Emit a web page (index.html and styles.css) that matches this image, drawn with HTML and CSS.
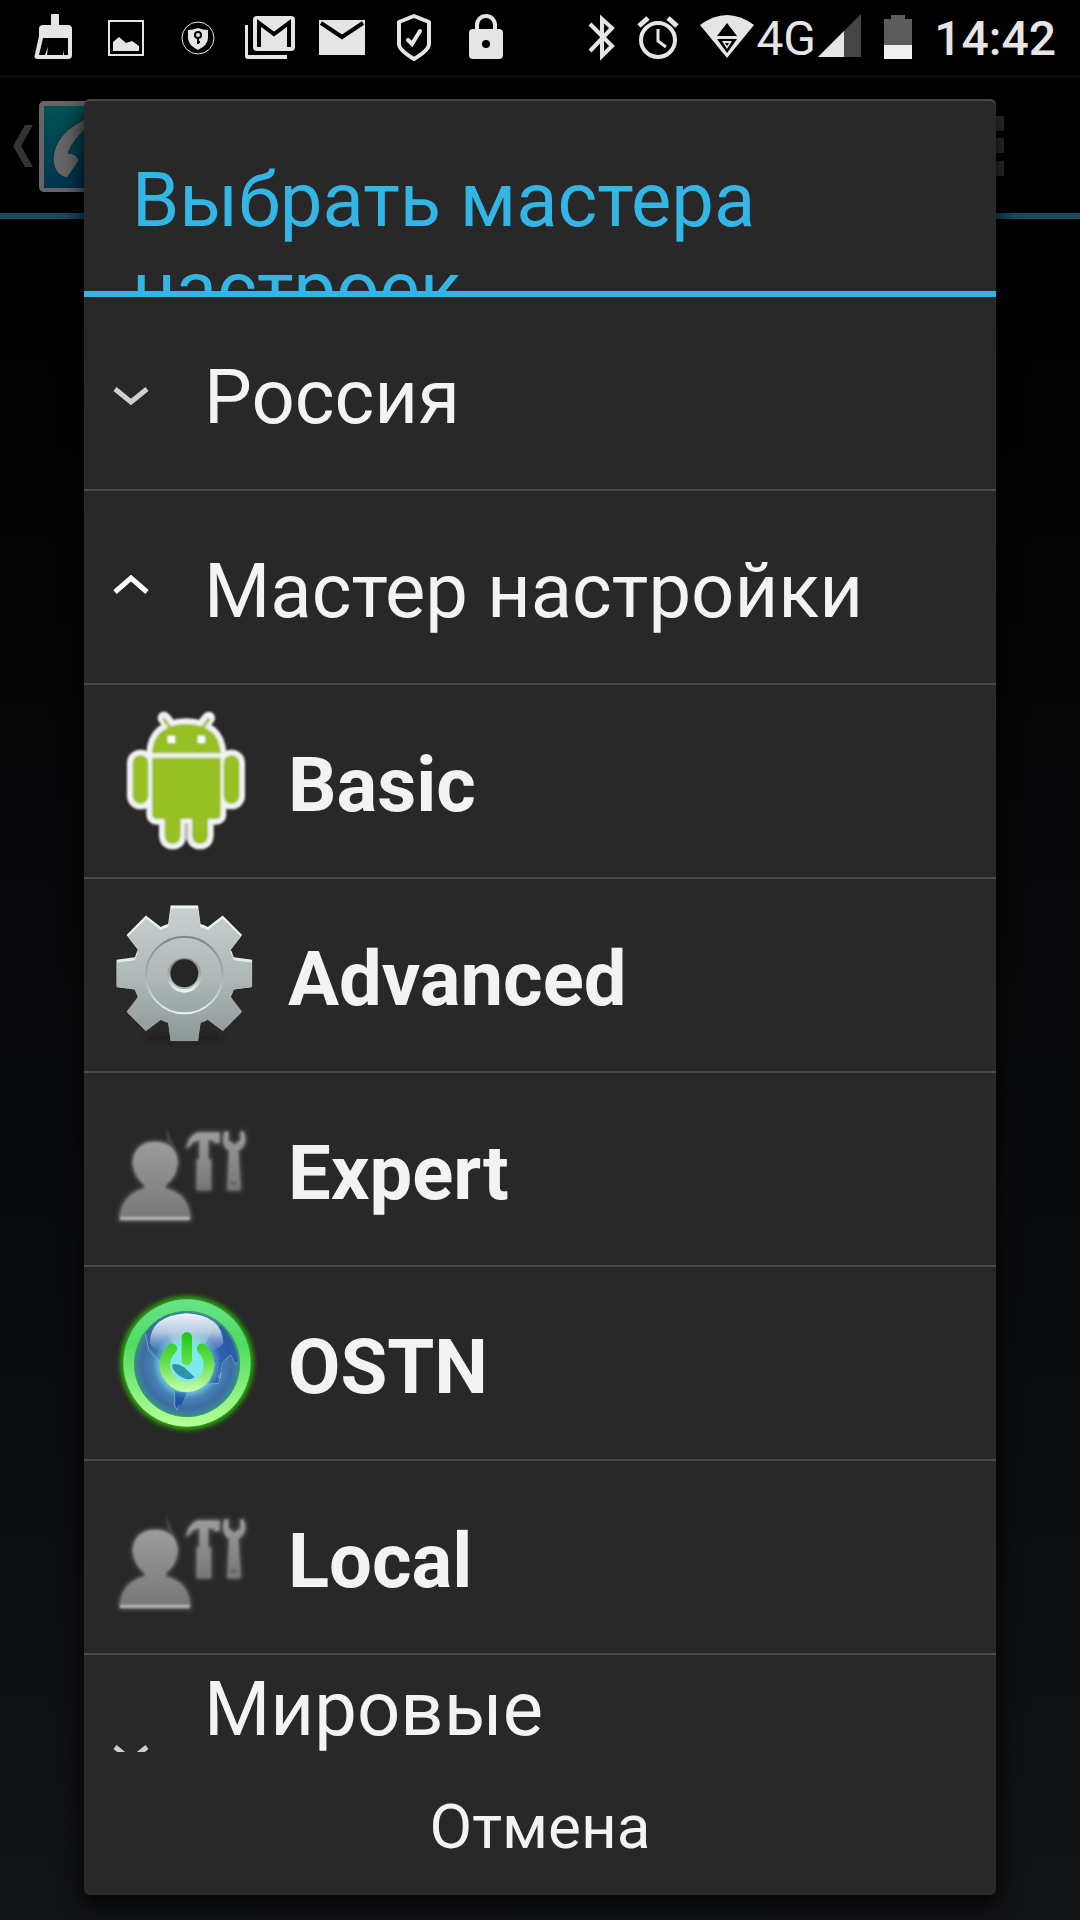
FILE: index.html
```html
<!DOCTYPE html>
<html lang="ru">
<head>
  <meta charset="UTF-8" />
  <meta name="viewport" content="width=device-width, initial-scale=1.0"/>
  <title>Выбрать мастера настроек</title>
  <link rel="stylesheet" href="styles.css">
</head>
<body>
  <header class="status-bar">
    <div class="notifications">
      <svg viewBox="0 0 72 72">
        <path d="M34 25V15q0-1 1-1h6q1 0 1 1v10h9q4 0 4 4v26q0 4-4 4H21q-5 0-3-5l4-18v-7q0-4 4-4z"/>
        <path class="cut" d="M26 38h25v17h-4l-1-5v5H30l1-8-3 8h-6z"/>
      </svg>
      <svg viewBox="0 0 72 72">
        <path class="line" stroke-width="2" d="M20 21h34v34H20z"/>
        <path d="M24 51V42l6-5 7 6 6-2 7 5v5z"/>
      </svg>
      <svg viewBox="0 0 72 72">
        <circle class="line" stroke-width="1" cx="37" cy="38" r="16"/>
        <path d="M37 28q5 2 10 2v8q0 7-10 12-10-5-10-12v-8q5 0 10-2z"/>
        <circle class="line-cut" stroke-width="2" cx="37" cy="35" r="3"/>
        <path class="line-cut" stroke-width="2" d="M37 38v6m0-2h2"/>
      </svg>
      <svg viewBox="0 0 72 72">
        <path d="M12 25h3v30h39v4H15q-3 0-3-3z"/>
        <rect x="20" y="16" width="42" height="35" rx="4"/>
        <path class="line-cut" stroke-width="4" d="M26 47V23l15 11 15-11v24"/>
      </svg>
      <svg viewBox="0 0 72 72">
        <path d="M14 20h46v35H14z"/>
        <path class="line-cut" stroke-width="4" d="M16 23l21 14 21-14"/>
      </svg>
      <svg viewBox="0 0 72 72">
        <path class="line" stroke-width="4" stroke-linejoin="round" d="M37 16l15 6v22q0 6-15 15-15-9-15-15V22z"/>
        <path class="line" stroke-width="4" stroke-linecap="round" d="M31 40l4 4 8-13"/>
      </svg>
      <svg viewBox="0 0 72 72">
        <path class="line" stroke-width="4" d="M28 30v-5a9 9 0 0 1 18 0v5"/>
        <rect x="20" y="29" width="34" height="30" rx="4"/>
        <circle class="cut" cx="37" cy="44" r="4"/>
      </svg>
    </div>
    <div class="system">
      <svg width="28" height="72" viewBox="0 0 28 72">
        <path class="line" stroke-width="4" d="M2 24l22 22-10 10V19l10 9L2 51"/>
      </svg>
      <svg width="42" height="72" viewBox="0 0 42 72">
        <circle class="line" stroke-width="4" cx="21" cy="40" r="17"/>
        <path class="line" stroke-width="3" d="M21 29v12l8 6"/>
        <path class="line" stroke-width="5" d="M2 26l9-8M40 26l-9-8"/>
      </svg>
      <div class="network">
        <svg width="54" height="72" viewBox="0 0 54 72">
          <path d="M0 25q27-20 54 0L27 58z"/>
          <path class="cut" d="M27 23l10 13H17zM17 39h20l-10 14z"/>
          <path d="M22 41h10l-5 8z"/>
          <path class="cut" d="M25 43h4l-2 3z"/>
        </svg>
        <span class="network-type">4G</span>
        <svg width="44" height="72" viewBox="0 0 44 72">
          <path d="M43 14v43H0z" fill="#464646"/>
          <path d="M26 31v26H0z"/>
        </svg>
      </div>
      <svg width="30" height="72" viewBox="0 0 30 72">
        <path d="M8 15h14v4h7v26H1V19h7z" fill="#5c5c5c"/>
        <path d="M1 45h28v14H1z" fill="#f0f0f0"/>
      </svg>
      <time class="clock">14:42</time>
    </div>
  </header>

  <div class="app-bar">
    <svg class="up-arrow" viewBox="0 0 20 42"><path d="M12 0h8L8 21l12 21h-8L0 21z" fill="#343434"/></svg>
    <svg class="app-logo" viewBox="0 0 92 92">
      <defs>
        <linearGradient id="logoFill" x1="0" y1="0" x2="0" y2="1">
          <stop offset="0" stop-color="#005355"/>
          <stop offset="1" stop-color="#00334f"/>
        </linearGradient>
      </defs>
      <rect x="0" y="1" width="92" height="91" rx="5" fill="#666"/>
      <rect x="5" y="6" width="82" height="82" fill="url(#logoFill)"/>
      <path d="M54 15Q14 32 14 60q1 15 14 18l12-17q-1-7-11-8 6-16 25-29z" fill="#676767" stroke="#0c3037"/>
    </svg>
    <svg class="overflow" viewBox="0 0 15 60"><path d="M0 0h15v15H0zM0 22h15v15H0zM0 45h15v15H0z" fill="#2f2f2f"/></svg>
  </div>

  <div class="overlay">
    <div class="dialog" role="dialog" aria-labelledby="dialogTitle">
      <h1 class="dialog-title" id="dialogTitle">Выбрать мастера настроек</h1>

      <ul class="wizard-list">
        <li>
          <button class="row group" aria-expanded="false">
            <svg class="chevron" viewBox="0 0 36 24"><path d="M2 8l16 13L34 8" stroke="#cfcfcf"/></svg>
            <span class="label">Россия</span>
          </button>
        </li>
        <li>
          <button class="row group" aria-expanded="true">
            <svg class="chevron" viewBox="0 0 36 24"><path d="M2 17L18 3l16 14" stroke="#fff"/></svg>
            <span class="label">Мастер настройки</span>
          </button>
        </li>
        <li>
          <button class="row wizard">
            <svg class="icon" viewBox="102 57 432 432">
              <defs>
                <g id="robot">
                  <path d="M216 190q4-86 103-88 99 2 103 88z"/>
                  <path d="M216 203h206v170q0 14-14 14h-24v50q-2 24-24 24t-24-24v-50h-34v50q-2 24-24 24t-24-24v-50h-22q-16 0-16-16z"/>
                  <rect x="158" y="196" width="47" height="145" rx="23"/>
                  <rect x="431" y="196" width="47" height="145" rx="23"/>
                </g>
                <filter id="soft"><feGaussianBlur stdDeviation="3"/></filter>
              </defs>
              <g filter="url(#soft)">
                <use href="#robot" fill="#f2f2f2" stroke="#f2f2f2" class="robot-outline"/>
                <path d="M252 84l18 22M386 84l-18 22" stroke="#f2f2f2" stroke-width="38" stroke-linecap="round"/>
                <path d="M313 400h12v48h-12z" fill="#bbb"/>
                <use href="#robot" fill="#97c022"/>
                <path d="M250 86l24 32M388 86l-24 32" stroke="#97c022" stroke-width="9"/>
                <path d="M263 137h22v22h-22zM353 137h22v22h-22z" fill="#fff"/>
              </g>
            </svg>
            <span class="label">Basic</span>
          </button>
        </li>
        <li>
          <button class="row wizard">
            <svg class="icon" viewBox="102 639 432 432">
              <defs>
                <linearGradient id="metal" gradientUnits="userSpaceOnUse" x1="0" y1="650" x2="0" y2="1055">
                  <stop offset="0" stop-color="#c9cfce"/>
                  <stop offset="0.5" stop-color="#afb8b7"/>
                  <stop offset="1" stop-color="#8b9695"/>
                </linearGradient>
                <linearGradient id="shine" gradientUnits="userSpaceOnUse" x1="0" y1="650" x2="0" y2="1055">
                  <stop offset="0" stop-color="#edfaf8"/>
                  <stop offset="0.5" stop-color="#dceae8"/>
                  <stop offset="0.7" stop-color="#a0abaa"/>
                </linearGradient>
                <path id="tooth" d="M264 705l8-59h82l8 59z"/>
                <clipPath id="gear">
                  <circle cx="313" cy="850" r="156"/>
                  <use href="#tooth"/>
                  <use href="#tooth" transform="rotate(45 313 850)"/>
                  <use href="#tooth" transform="rotate(90 313 850)"/>
                  <use href="#tooth" transform="rotate(135 313 850)"/>
                  <use href="#tooth" transform="rotate(180 313 850)"/>
                  <use href="#tooth" transform="rotate(225 313 850)"/>
                  <use href="#tooth" transform="rotate(270 313 850)"/>
                  <use href="#tooth" transform="rotate(315 313 850)"/>
                </clipPath>
                <linearGradient id="ringEdge" x1="0" y1="0" x2="0" y2="1">
                  <stop offset="0" stop-color="#7d8786"/>
                  <stop offset="0.5" stop-color="#a5afae"/>
                  <stop offset="1" stop-color="#e8f4f2"/>
                </linearGradient>
                <filter id="soft3"><feGaussianBlur stdDeviation="2"/></filter>
                <filter id="shade" x="-20%" y="-100%" width="140%" height="300%"><feGaussianBlur stdDeviation="8"/></filter>
              </defs>
              <ellipse cx="313" cy="1044" rx="120" ry="10" fill="#1c1c1c" filter="url(#shade)"/>
              <g filter="url(#soft3)">
                <g clip-path="url(#gear)">
                  <path d="M100 640h430v430H100z" fill="url(#shine)"/>
                  <g transform="translate(0 9)">
                    <path d="M100 640h430v430H100z" fill="url(#metal)" clip-path="url(#gear)"/>
                  </g>
                </g>
                <circle cx="313" cy="855" r="115" fill="none" stroke="url(#ringEdge)" stroke-width="6"/>
                <circle cx="313" cy="856" r="47" fill="none" stroke="url(#ringEdge)" stroke-width="10"/>
                <circle cx="313" cy="850" r="42" fill="#282828"/>
              </g>
            </svg>
            <span class="label">Advanced</span>
          </button>
        </li>
        <li>
          <button class="row wizard">
            <svg class="icon" viewBox="102 51 432 432">
              <defs>
                <linearGradient id="grey" x1="0" y1="0" x2="0" y2="1">
                  <stop offset="0" stop-color="#9c9c9c"/>
                  <stop offset="1" stop-color="#777"/>
                </linearGradient>
                <filter id="glow" x="-20%" y="-20%" width="140%" height="140%"><feGaussianBlur stdDeviation="6"/></filter>
                <filter id="soft2"><feGaussianBlur stdDeviation="3"/></filter>
                <path id="man" d="M225 186q64 0 68 62-4 44-36 66v12q66 14 73 84v10H120v-10q8-68 74-84v-12q-30-22-36-66 6-62 67-62z"/>
                <path id="hammer" d="M320 204q4-34 32-46h66v30h-14l-4-7h-16v58h8v90h-41v-90h8v-58q-22 2-28 15z"/>
                <path id="wrench" d="M434 155q-12 42 14 57l-5 117h38l-7-117q32-18 16-57l-8 1v25l-19 14-18-14v-25zM454 304h15l3 10h-22z" fill-rule="evenodd"/>
                <g id="userTools">
                  <g filter="url(#glow)" fill="#666" stroke="#666" stroke-width="8">
                    <use href="#man"/>
                    <use href="#hammer"/>
                    <use href="#wrench"/>
                  </g>
                  <g filter="url(#soft2)" fill="url(#grey)">
                    <path d="M257 140l6 50 24 20z" fill="#484848"/>
                    <use href="#man"/>
                    <use href="#hammer"/>
                    <use href="#wrench"/>
                    <path d="M120 411h209v9H120z" fill="#b5b5b5"/>
                  </g>
                </g>
              </defs>
              <use href="#userTools"/>
            </svg>
            <span class="label">Expert</span>
          </button>
        </li>
        <li>
          <button class="row wizard">
            <svg class="icon" viewBox="102 633 432 432">
              <defs>
                <linearGradient id="ring" x1="0" y1="0" x2="0" y2="1">
                  <stop offset="0" stop-color="#68e38c"/>
                  <stop offset="0.35" stop-color="#4fdc60"/>
                  <stop offset="1" stop-color="#b5ff96"/>
                </linearGradient>
                <radialGradient id="sea">
                  <stop offset="0" stop-color="#8af3f3"/>
                  <stop offset="0.38" stop-color="#76dfe9"/>
                  <stop offset="0.62" stop-color="#4a86b8"/>
                  <stop offset="0.85" stop-color="#3d6da3"/>
                  <stop offset="1" stop-color="#3b8d90"/>
                </radialGradient>
                <radialGradient id="shallow">
                  <stop offset="0.4" stop-color="#7fe9ee"/>
                  <stop offset="1" stop-color="#7fe9ee" stop-opacity="0"/>
                </radialGradient>
                <linearGradient id="gloss" x1="0" y1="0" x2="0" y2="1">
                  <stop offset="0" stop-color="#f2f4fa"/>
                  <stop offset="0.5" stop-color="#d5e0ee" stop-opacity="0.8"/>
                  <stop offset="1" stop-color="#a8c8e8" stop-opacity="0.1"/>
                </linearGradient>
                <linearGradient id="power" gradientUnits="userSpaceOnUse" x1="0" y1="757" x2="0" y2="936">
                  <stop offset="0" stop-color="#17ca10"/>
                  <stop offset="0.5" stop-color="#66de48"/>
                  <stop offset="1" stop-color="#c8ffb2"/>
                </linearGradient>
                <filter id="halo" x="-20%" y="-20%" width="140%" height="140%"><feGaussianBlur stdDeviation="8"/></filter>
              </defs>
              <circle cx="321" cy="849" r="200" fill="#2fa80c" filter="url(#halo)"/>
              <circle cx="321" cy="849" r="191" fill="url(#ring)"/>
              <circle cx="321" cy="852" r="158" fill="url(#sea)" stroke="#3f9a67" stroke-width="3"/>
              <path d="M196 760q30-48 74-58l-10 56 26 44-34 38-16 2-34-50q-2-20-6-32z" fill="#2f66ac" opacity="0.6"/>
              <path d="M424 736q40 40 50 108l-10 10-14-30-18 20-14 66-32 2 20-60-30-60 20-40z" fill="#2352a8" opacity="0.7"/>
              <path d="M284 934l36 4-14 32-10 18q-14-6-10-26z" fill="#2352a8"/>
              <path d="M196 760l10 50 36 36M474 844l-8 10-14-30-24 22-12 64-28 2M284 936v42l8 12 6-16M414 888l10-8-4 16z" fill="none" stroke="#8fb4d9" stroke-width="2"/>
              <circle cx="321" cy="855" r="104" fill="url(#shallow)"/>
              <path d="M276 854q16-6 36 8l32 30q-20 14-48-6-18-14-20-32z" fill="#2f93a8"/>
              <path d="M210 790q0-84 110-90 108 6 110 90-24 34-56 14-54-34-108 2-40 14-56-16z" fill="url(#gloss)"/>
              <path d="M276 806a66 66 0 1 0 90 0" fill="none" stroke="url(#power)" stroke-width="31" stroke-linecap="round"/>
              <rect x="305" y="757" width="31" height="99" rx="15" fill="url(#power)"/>
            </svg>
            <span class="label">OSTN</span>
          </button>
        </li>
        <li>
          <button class="row wizard">
            <svg class="icon" viewBox="102 51 432 432"><use href="#userTools"/></svg>
            <span class="label">Local</span>
          </button>
        </li>
        <li>
          <button class="row group tall" aria-expanded="false">
            <svg class="chevron" viewBox="0 0 36 24"><path d="M2 8l16 13L34 8" stroke="#cfcfcf"/></svg>
            <span class="label">Мировые</span>
          </button>
        </li>
      </ul>

      <button class="cancel">Отмена</button>
    </div>
  </div>
</body>
</html>
```
FILE: styles.css
```css
* {
  box-sizing: border-box;
}

body {
  margin: 0;
  min-height: 100vh;
  font-family: Roboto, "Noto Sans", sans-serif;
  background: linear-gradient(#000 0%, #000 12%, #08090b 55%, #111315 100%);
  color: #f3f3f3;
  overflow: hidden;
}

svg {
  display: block;
  flex: none;
}

button {
  border: none;
  background: none;
  color: inherit;
  font-family: inherit;
  cursor: pointer;
}

/* Status bar */
.status-bar {
  display: flex;
  justify-content: space-between;
  height: 78px;
  padding: 0 24px 0 17px;
  background-color: #000;
  border-bottom: 3px solid #0b0b0b;
}

.status-bar svg {
  height: 72px;
  fill: #e5e5e5;
}

.notifications {
  display: flex;
}

.notifications svg {
  width: 72px;
}

.status-bar .cut {
  fill: #000;
}

.status-bar .line {
  fill: none;
  stroke: #e5e5e5;
}

.status-bar .line-cut {
  fill: none;
  stroke: #000;
}

.system {
  display: flex;
  gap: 21px;
  color: #e5e5e5;
  line-height: 78px;
}

.network {
  display: flex;
}

.network-type {
  width: 64px;
  text-align: center;
  font-size: 48px;
}

.clock {
  font-size: 48px;
  font-weight: 500;
}

/* Dimmed app bar under the dialog */
.app-bar {
  display: flex;
  align-items: center;
  height: 141px;
  padding: 0 76px 0 13px;
  border-bottom: 6px solid #174a5f;
}

.up-arrow {
  width: 20px;
  height: 42px;
}

.app-logo {
  width: 92px;
  height: 92px;
  margin-left: 6px;
}

.overflow {
  width: 15px;
  height: 60px;
  margin-left: auto;
}

/* Dialog */
.overlay {
  position: fixed;
  inset: 0;
  display: flex;
  padding: 99px 84px 25px;
}

.dialog {
  flex: 1;
  min-width: 0;
  display: flex;
  flex-direction: column;
  overflow: hidden;
  background-color: #282828;
  border-radius: 6px;
  box-shadow: inset 0 2px 0 #464446, 0 8px 24px #000;
}

.dialog-title {
  flex: none;
  height: 198px;
  margin: 0;
  padding: 57px 48px 0;
  overflow: hidden;
  border-bottom: 6px solid #33b5e5;
  color: #33b5e5;
  font-size: 76px;
  font-weight: 400;
  line-height: 89px;
}

.wizard-list {
  flex: 1;
  min-height: 0;
  margin: 0;
  padding: 0;
  overflow: hidden;
  list-style: none;
}

.wizard-list li {
  border-bottom: 2px solid #484848;
}

.row {
  display: flex;
  align-items: center;
  width: 100%;
  height: 192px;
  padding: 0 30px;
  font-size: 76px;
  line-height: 89px;
  text-align: left;
}

.label {
  padding-top: 8px;
}

.group {
  gap: 55px;
  padding-left: 29px;
}

.tall .label {
  align-self: flex-start;
  padding-top: 10px;
}

.wizard {
  gap: 30px;
  font-weight: 700;
}

.chevron {
  width: 36px;
  height: 24px;
  fill: none;
  stroke-width: 5;
}

.icon {
  width: 144px;
  height: 144px;
}

.robot-outline {
  stroke-width: 34px;
  stroke-linejoin: round;
}

.cancel {
  flex: none;
  height: 143px;
  padding: 6px 48px 0;
  font-size: 62px;
}
```
